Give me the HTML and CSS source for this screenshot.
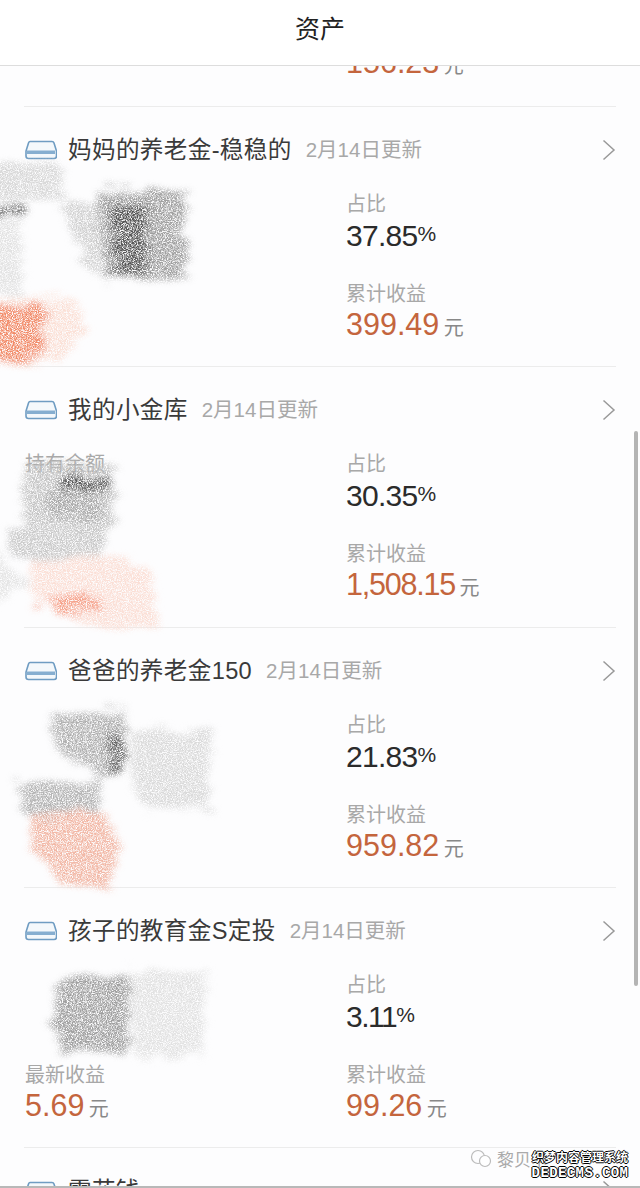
FILE: index.html
```html
<!DOCTYPE html>
<html lang="zh-CN">
<head>
<meta charset="UTF-8">
<meta name="viewport" content="width=device-width, initial-scale=1.0">
<title>资产</title>
<link rel="stylesheet" href="styles.css">
</head>
<body>
<svg class="defs" width="0" height="0">
    <filter id="pencil" x="-20%" y="-20%" width="140%" height="140%">
        <feTurbulence type="fractalNoise" baseFrequency="0.03 0.16" numOctaves="2" seed="7" result="wobble"/>
        <feDisplacementMap in="SourceGraphic" in2="wobble" scale="26" xChannelSelector="R" yChannelSelector="G" result="rough"/>
        <feGaussianBlur in="rough" stdDeviation="3" result="soft"/>
        <feTurbulence type="fractalNoise" baseFrequency="0.8 1.1" numOctaves="2" seed="4" result="noise"/>
        <feColorMatrix in="noise" type="matrix" values="0 0 0 0 0  0 0 0 0 0  0 0 0 0 0  0 0 0 3 -0.850" result="grain"/>
        <feComposite in="soft" in2="grain" operator="in"/>
    </filter>
</svg>

<div class="page">
    <header class="topbar">资产</header>

    <main class="list">
        <div class="card card-cut">
            <div class="money"><span class="amount">156.23</span> <span class="unit">元</span></div>
        </div>

        <section class="card">
            <div class="card-head">
                <svg class="bank" viewBox="0 0 32 20"><path d="M5 1.500h22q1.500 0 2 1.500l2.500 8v5q0 2.500-2.500 2.500H3.500Q1 18.500 1 16v-5l2.500-8Q4 1.500 5 1.500z" fill="#f4f8fb" stroke="#6f9cc2" stroke-width="1.600"/><path d="M2 10.500h28v3.500H2z" fill="#86aed0"/></svg>
                <h2 class="name">妈妈的养老金-稳稳的</h2>
                <span class="date">2月14日更新</span>
                <svg class="arrow" viewBox="0 0 14 22"><path d="M1.500 1.500L12 11 1.500 20.500" fill="none" stroke="#999" stroke-width="1.500"/></svg>
            </div>
            <div class="stats">
                <div class="stat"></div>
                <div class="stat">
                    <div class="label">占比</div>
                    <div class="ratio">37.85<span class="pct">%</span></div>
                </div>
                <div class="stat"></div>
                <div class="stat">
                    <div class="label">累计收益</div>
                    <div class="money"><span class="amount">399.49</span> <span class="unit">元</span></div>
                </div>
            </div>
            <svg class="scribble" viewBox="0 0 230 260" filter="url(#pencil)">
                <path d="M-10 56H58L68 92H-10z" fill="#d8d8d8"/>
                <path d="M-8 100H24V112H-8z" fill="#777"/>
                <path d="M-8 116H22V186H-8z" fill="#e2e2e2"/>
                <path d="M60 96H100V170H92z" fill="#d0d0d0"/>
                <path d="M96 84H186V170H104z" fill="#a0a0a0"/>
                <path d="M110 96H146V166H116z" fill="#555"/>
                <path d="M-8 190H70L90 216 60 256H-8z" fill="#fbe0d6"/>
                <path d="M-8 196H44V252H-8z" fill="#f28a68"/>
            </svg>
        </section>

        <section class="card">
            <div class="card-head">
                <svg class="bank" viewBox="0 0 32 20"><path d="M5 1.500h22q1.500 0 2 1.500l2.500 8v5q0 2.500-2.500 2.500H3.500Q1 18.500 1 16v-5l2.500-8Q4 1.500 5 1.500z" fill="#f4f8fb" stroke="#6f9cc2" stroke-width="1.600"/><path d="M2 10.500h28v3.500H2z" fill="#86aed0"/></svg>
                <h2 class="name">我的小金库</h2>
                <span class="date">2月14日更新</span>
                <svg class="arrow" viewBox="0 0 14 22"><path d="M1.500 1.500L12 11 1.500 20.500" fill="none" stroke="#999" stroke-width="1.500"/></svg>
            </div>
            <div class="stats">
                <div class="stat">
                    <div class="label">持有余额</div>
                </div>
                <div class="stat">
                    <div class="label">占比</div>
                    <div class="ratio">30.35<span class="pct">%</span></div>
                </div>
                <div class="stat"></div>
                <div class="stat">
                    <div class="label">累计收益</div>
                    <div class="money"><span class="amount tight">1,508.15</span> <span class="unit">元</span></div>
                </div>
            </div>
            <svg class="scribble" viewBox="0 0 230 260" filter="url(#pencil)">
                <path d="M24 98H112L116 150 100 190H40L24 150z" fill="#c4c4c4"/>
                <path d="M58 110H112V122H58z" fill="#555"/>
                <path d="M44 124H104V150H50z" fill="#a8a8a8"/>
                <path d="M6 162L60 148 104 190 70 206 8 186z" fill="#cacaca"/>
                <path d="M-5 182L30 216-5 236z" fill="#e4e4e4"/>
                <path d="M30 192H110L150 202 158 260H82L70 240 32 232z" fill="#fbdfd6"/>
                <path d="M32 238L85 222 112 244 70 246z" fill="#f6a088"/>
            </svg>
        </section>

        <section class="card">
            <div class="card-head">
                <svg class="bank" viewBox="0 0 32 20"><path d="M5 1.500h22q1.500 0 2 1.500l2.500 8v5q0 2.500-2.500 2.500H3.500Q1 18.500 1 16v-5l2.500-8Q4 1.500 5 1.500z" fill="#f4f8fb" stroke="#6f9cc2" stroke-width="1.600"/><path d="M2 10.500h28v3.500H2z" fill="#86aed0"/></svg>
                <h2 class="name">爸爸的养老金150</h2>
                <span class="date">2月14日更新</span>
                <svg class="arrow" viewBox="0 0 14 22"><path d="M1.500 1.500L12 11 1.500 20.500" fill="none" stroke="#999" stroke-width="1.500"/></svg>
            </div>
            <div class="stats">
                <div class="stat"></div>
                <div class="stat">
                    <div class="label">占比</div>
                    <div class="ratio">21.83<span class="pct">%</span></div>
                </div>
                <div class="stat"></div>
                <div class="stat">
                    <div class="label">累计收益</div>
                    <div class="money"><span class="amount">959.82</span> <span class="unit">元</span></div>
                </div>
            </div>
            <svg class="scribble" viewBox="0 0 230 260" filter="url(#pencil)">
                <path d="M50 84H126V150H100L56 120z" fill="#b0b0b0"/>
                <path d="M106 106H126V150H112z" fill="#666"/>
                <path d="M132 102H210V180H142L132 150z" fill="#dadada"/>
                <path d="M18 154H100V186H24z" fill="#b4b4b4"/>
                <path d="M30 186H106L120 220 108 260H60L32 220z" fill="#f2b8a6"/>
            </svg>
        </section>

        <section class="card">
            <div class="card-head">
                <svg class="bank" viewBox="0 0 32 20"><path d="M5 1.500h22q1.500 0 2 1.500l2.500 8v5q0 2.500-2.500 2.500H3.500Q1 18.500 1 16v-5l2.500-8Q4 1.500 5 1.500z" fill="#f4f8fb" stroke="#6f9cc2" stroke-width="1.600"/><path d="M2 10.500h28v3.500H2z" fill="#86aed0"/></svg>
                <h2 class="name">孩子的教育金S定投</h2>
                <span class="date">2月14日更新</span>
                <svg class="arrow" viewBox="0 0 14 22"><path d="M1.500 1.500L12 11 1.500 20.500" fill="none" stroke="#999" stroke-width="1.500"/></svg>
            </div>
            <div class="stats">
                <div class="stat"></div>
                <div class="stat">
                    <div class="label">占比</div>
                    <div class="ratio tight">3.11<span class="pct">%</span></div>
                </div>
                <div class="stat">
                    <div class="label">最新收益</div>
                    <div class="money"><span class="amount">5.69</span> <span class="unit">元</span></div>
                </div>
                <div class="stat">
                    <div class="label">累计收益</div>
                    <div class="money"><span class="amount">99.26</span> <span class="unit">元</span></div>
                </div>
            </div>
            <svg class="scribble" viewBox="0 0 230 260" filter="url(#pencil)">
                <path d="M58 90H130V165H60L52 130z" fill="#a0a0a0"/>
                <path d="M130 84H204V168H135z" fill="#e2e2e2"/>
            </svg>
        </section>

        <section class="card">
            <div class="card-head">
                <svg class="bank" viewBox="0 0 32 20"><path d="M5 1.500h22q1.500 0 2 1.500l2.500 8v5q0 2.500-2.500 2.500H3.500Q1 18.500 1 16v-5l2.500-8Q4 1.500 5 1.500z" fill="#f4f8fb" stroke="#6f9cc2" stroke-width="1.600"/><path d="M2 10.500h28v3.500H2z" fill="#86aed0"/></svg>
                <h2 class="name">零花钱</h2>
                <svg class="arrow" viewBox="0 0 14 22"><path d="M1.500 1.500L12 11 1.500 20.500" fill="none" stroke="#999" stroke-width="1.500"/></svg>
            </div>
        </section>

        <div class="scrollbar"></div>

        <div class="wechat">
            <svg class="wechat-icon" viewBox="0 0 22 20"><circle cx="8" cy="8" r="6.500" fill="none" stroke="#bbb" stroke-width="1.200"/><circle cx="15" cy="12" r="5.500" fill="#fff" stroke="#bbb" stroke-width="1.200"/></svg>
            <span>黎贝卡</span>
        </div>
        <div class="stamp">
            <div class="stamp-cn">织梦内容管理系统</div>
            <div class="stamp-en">DEDECMS.COM</div>
        </div>
    </main>

    <div class="tabline"></div>
</div>
</body>
</html>
```

FILE: styles.css
```css
* {
    box-sizing: border-box;
}
body {
    margin: 0;
    font-family: "Liberation Sans", "Noto Sans CJK SC", sans-serif;
    background-color: #fdfdfe;
    color: #2b2b2b;
}
.defs {
    position: absolute;
}
.page {
    display: flex;
    flex-direction: column;
    height: 100vh;
    overflow: hidden;
}
.topbar {
    flex: none;
    height: 66px;
    padding-top: 12px;
    line-height: 34px;
    font-size: 25px;
    text-align: center;
    color: #222;
    background-color: #fff;
    border-bottom: 1px solid #ddd;
}
.list {
    flex: 1;
    position: relative;
    overflow: hidden;
}
.card {
    position: relative;
    height: 260.25px;
    margin: 0 24px;
    padding-top: 26px;
    border-bottom: 1px solid #ececec;
}
.card-cut {
    display: flex;
    align-items: flex-end;
    height: 41px;
    padding: 0 0 20px 322px;
}
.card-head {
    display: flex;
    align-items: center;
    height: 30px;
    padding-left: 1px;
}
.bank {
    width: 32px;
    height: 20px;
    margin: 4px 11px 0 0;
}
.name {
    margin: 0;
    font-size: 23.600px;
    font-weight: normal;
    letter-spacing: 0.350px;
    color: #3a3a3a;
}
.date {
    margin-left: 14px;
    font-size: 20.500px;
    color: #a8a8a8;
}
.arrow {
    width: 14px;
    height: 22px;
    margin: 4px 0 0 auto;
}
.stats {
    display: grid;
    grid-template-columns: 322px 1fr;
    row-gap: 26px;
    margin-top: 27px;
}
.stat {
    height: 64px;
}
.stat:nth-child(odd) {
    padding-left: 1px;
}
.label {
    line-height: 28px;
    font-size: 20px;
    color: #a8a8a8;
}
.ratio {
    margin-top: -2px;
    line-height: 36px;
    font-size: 30px;
    letter-spacing: -0.700px;
    color: #2b2b2b;
}
.ratio.tight {
    letter-spacing: -1.500px;
}
.pct {
    font-size: 21px;
    letter-spacing: 0;
    vertical-align: 5px;
}
.money {
    margin-top: -2px;
    line-height: 36px;
    white-space: nowrap;
}
.amount {
    font-size: 30.500px;
    color: #c4653d;
}
.amount.tight {
    letter-spacing: -1.200px;
}
.unit {
    font-size: 20px;
    color: #888;
}
.scribble {
    position: absolute;
    left: -24px;
    top: 0;
    width: 230px;
    height: 260px;
    overflow: visible;
    pointer-events: none;
}
.scrollbar {
    position: absolute;
    right: 2px;
    top: 365px;
    width: 4px;
    height: 555px;
    border-radius: 2px;
    background-color: #b4b4b4;
}
.wechat {
    position: absolute;
    right: 92px;
    bottom: 15px;
    display: flex;
    align-items: center;
    gap: 5px;
    font-size: 17px;
    color: #aaa;
}
.wechat-icon {
    width: 22px;
    height: 20px;
}
.stamp {
    position: absolute;
    right: 10px;
    bottom: 5px;
    width: 100px;
    text-align: center;
    color: #fff;
    text-shadow: 1px 0 0 #000, -1px 0 0 #000, 0 1px 0 #000, 0 -1px 0 #000;
}
.stamp-cn {
    line-height: 14px;
    font-size: 12px;
    font-weight: bold;
    white-space: nowrap;
}
.stamp-en {
    line-height: 16px;
    font-family: "Liberation Mono", monospace;
    font-size: 14px;
    font-weight: bold;
    letter-spacing: 0.400px;
    white-space: nowrap;
}
.tabline {
    flex: none;
    height: 2px;
    background-color: #b8b8b8;
}
```
